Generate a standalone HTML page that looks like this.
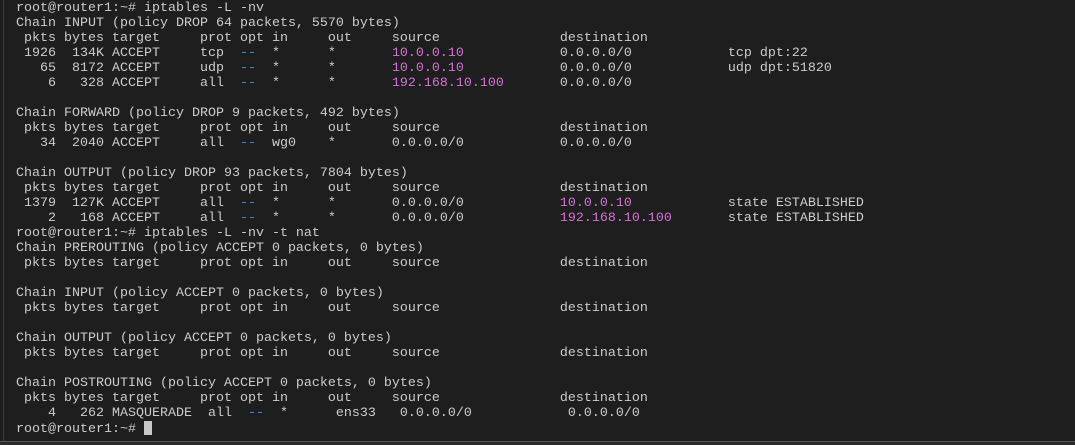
<!DOCTYPE html>
<html><head><meta charset="utf-8"><style>
html,body{margin:0;padding:0;}
body{width:1075px;height:444px;background:#1e1e1e;overflow:hidden;position:relative;}
.bl{position:absolute;left:3px;top:0;width:1px;height:441px;background:#3c3c3c;}
.bb{position:absolute;left:0;top:441px;width:1075px;height:3px;background:#2b2b2b;border-top:1px solid #555;}
pre{position:absolute;left:16px;top:1px;margin:0;font-family:"Liberation Mono","DejaVu Sans Mono",monospace;font-size:13.33px;line-height:15px;color:#cccccc;}
.c{color:#3b8eea}.m{color:#d670d6}
.cur{display:inline-block;width:8px;height:14px;background:#c8c8c8;vertical-align:-3px;}
</style></head><body>
<div class="bl"></div><div class="bb"></div>
<pre>root@router1:~# iptables -L -nv
Chain INPUT (policy DROP 64 packets, 5570 bytes)
 pkts bytes target     prot opt in     out     source               destination
 1926  134K ACCEPT     tcp  <span class="c">--</span>  *      *       <span class="m">10.0.0.10</span>            0.0.0.0/0            tcp dpt:22
   65  8172 ACCEPT     udp  <span class="c">--</span>  *      *       <span class="m">10.0.0.10</span>            0.0.0.0/0            udp dpt:51820
    6   328 ACCEPT     all  <span class="c">--</span>  *      *       <span class="m">192.168.10.100</span>       0.0.0.0/0

Chain FORWARD (policy DROP 9 packets, 492 bytes)
 pkts bytes target     prot opt in     out     source               destination
   34  2040 ACCEPT     all  <span class="c">--</span>  wg0    *       0.0.0.0/0            0.0.0.0/0

Chain OUTPUT (policy DROP 93 packets, 7804 bytes)
 pkts bytes target     prot opt in     out     source               destination
 1379  127K ACCEPT     all  <span class="c">--</span>  *      *       0.0.0.0/0            <span class="m">10.0.0.10</span>            state ESTABLISHED
    2   168 ACCEPT     all  <span class="c">--</span>  *      *       0.0.0.0/0            <span class="m">192.168.10.100</span>       state ESTABLISHED
root@router1:~# iptables -L -nv -t nat
Chain PREROUTING (policy ACCEPT 0 packets, 0 bytes)
 pkts bytes target     prot opt in     out     source               destination

Chain INPUT (policy ACCEPT 0 packets, 0 bytes)
 pkts bytes target     prot opt in     out     source               destination

Chain OUTPUT (policy ACCEPT 0 packets, 0 bytes)
 pkts bytes target     prot opt in     out     source               destination

Chain POSTROUTING (policy ACCEPT 0 packets, 0 bytes)
 pkts bytes target     prot opt in     out     source               destination
    4   262 MASQUERADE  all  <span class="c">--</span>  *      ens33   0.0.0.0/0            0.0.0.0/0
root@router1:~# <span class="cur"></span></pre>
</body></html>
